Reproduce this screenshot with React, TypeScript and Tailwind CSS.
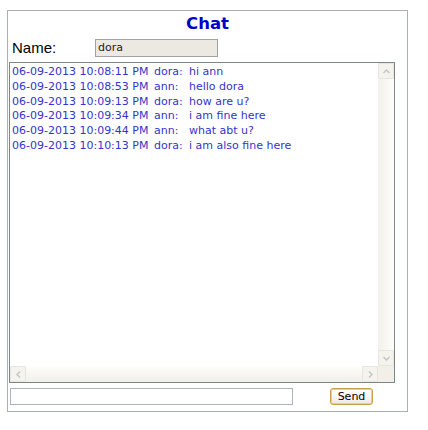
import React from "react";

const msgs: [string, string, string][] = [
  ["06-09-2013 10:08:11 PM", "dora:", "hi ann"],
  ["06-09-2013 10:08:53 PM", "ann:", "hello dora"],
  ["06-09-2013 10:09:13 PM", "dora:", "how are u?"],
  ["06-09-2013 10:09:34 PM", "ann:", "i am fine here"],
  ["06-09-2013 10:09:44 PM", "ann:", "what abt u?"],
  ["06-09-2013 10:10:13 PM", "dora:", "i am also fine here"],
];

function Chevron({ dir }: { dir: "up" | "down" | "left" | "right" }) {
  const rot = { up: 0, right: 90, down: 180, left: 270 }[dir];
  return (
    <svg width="9" height="9" viewBox="0 0 9 9" style={{ transform: `rotate(${rot}deg)` }}>
      <path d="M1.5 6 L4.5 3 L7.5 6" fill="none" stroke="#c2c5c8" strokeWidth="1.4" />
    </svg>
  );
}

function SBtn({ dir }: { dir: "up" | "down" | "left" | "right" }) {
  return (
    <div className="w-[16px] h-[16px] flex items-center justify-center bg-[#f4f3ee] border border-[#e7e5de] rounded-[1px] shrink-0">
      <Chevron dir={dir} />
    </div>
  );
}

export default function App() {
  return (
    <div className="pl-[7px] pt-[10px] bg-white min-h-[430px]">
      <div
        className="w-[401px] border border-[#a8b0b6] pt-[3px] pb-[6px] flex flex-col"
        style={{ fontFamily: '"DejaVu Sans", Verdana, sans-serif' }}
      >
        <div className="text-center font-bold text-[16.5px] leading-[20px] text-[#0000cc]">Chat</div>
        <div className="flex items-center h-[18px] mt-[5px] pl-[4px]">
          <div
            className="w-[83px] text-[15px] text-black leading-[18px]"
            style={{ fontFamily: '"Liberation Sans", Arial, sans-serif' }}
          >
            Name:
          </div>
          <div className="w-[123px] h-[18px] bg-[#ebe9e1] border border-[#a2a2a2] text-[11px] leading-[16px] pl-[2px] text-[#222]">
            dora
          </div>
        </div>
        <div className="ml-[1px] mt-[5px] w-[386px] h-[321px] border border-[#7a8888] flex flex-col">
          <div className="flex flex-1 min-h-0">
            <div className="flex-1 pt-[2px] pl-[2px] text-[11px] leading-[14.8px] text-[#3434c8]">
              {msgs.map((m, i) => (
                <div key={i} className="flex whitespace-nowrap">
                  <span className="w-[142px]">{m[0]}</span>
                  <span className="w-[35px]">{m[1]}</span>
                  <span>{m[2]}</span>
                </div>
              ))}
            </div>
            <div className="w-[16px] flex flex-col bg-gradient-to-r from-[#f2f1ec] to-[#fdfdfb]">
              <SBtn dir="up" />
              <div className="flex-1" />
              <SBtn dir="down" />
            </div>
          </div>
          <div className="h-[16px] flex">
            <div className="flex-1 flex bg-gradient-to-b from-[#fdfdfb] to-[#f1f0ea]">
              <SBtn dir="left" />
              <div className="flex-1" />
              <SBtn dir="right" />
            </div>
            <div className="w-[16px] bg-[#f1efe8]" />
          </div>
        </div>
        <div className="flex items-start mt-[5px] ml-[2px]">
          <div className="w-[283px] h-[17px] border border-[#a9b3bd] bg-white" />
          <div className="ml-[37px] w-[43px] h-[17px] rounded-[3px] border border-[#c5a04a] bg-gradient-to-b from-[#ffffff] to-[#ecebe3] shadow-[inset_0_0_0_1px_#f5cf72] flex items-center justify-center text-[11px] text-black leading-none">
            Send
          </div>
        </div>
      </div>
    </div>
  );
}
